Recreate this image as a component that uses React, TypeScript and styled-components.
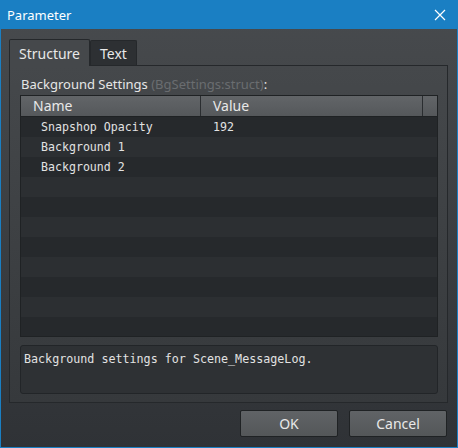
import styled, { createGlobalStyle } from "styled-components";

const GlobalStyle = createGlobalStyle`
  html, body {
    margin: 0;
    padding: 0;
    background: #2f3236;
  }
  * {
    box-sizing: border-box;
  }
`;

const Window = styled.div`
  width: 458px;
  height: 448px;
  display: flex;
  flex-direction: column;
  border: 1px solid #1a7fc3;
  border-top: none;
  background: linear-gradient(#484b4e, #2f3236);
  font-family: "Noto Sans", "Open Sans", sans-serif;
  color: #e6e6e6;
`;

const TitleBar = styled.div`
  height: 29px;
  background: #1a7fc3;
  display: flex;
  align-items: center;
  justify-content: space-between;
  padding: 0 12px 0 7px;
  margin: 0 -1px;
  color: #ffffff;
  font-size: 13px;
`;

const Body = styled.div`
  flex: 1;
  display: flex;
  flex-direction: column;
  padding: 9px 9px 10px 8px;
`;

const TabRow = styled.div`
  display: flex;
  align-items: flex-end;
  height: 27px;
`;

const Tab = styled.div<{ $active?: boolean }>`
  height: ${(p) => (p.$active ? "27px" : "25px")};
  padding: 0 9px;
  display: flex;
  align-items: center;
  font-size: 14px;
  color: #e8e8e8;
  background: ${(p) => (p.$active ? "#45484b" : "#2d3033")};
  border: 1px solid #25282b;
  border-bottom: none;
  border-radius: 2px 2px 0 0;
  margin-bottom: ${(p) => (p.$active ? "-1px" : "0")};
  position: relative;
  z-index: ${(p) => (p.$active ? 1 : 0)};
`;

const Pane = styled.div`
  height: 338px;
  border: 1px solid #25282b;
  background: linear-gradient(#45484b, #36393c);
  padding: 11px 9px 8px 10px;
  display: flex;
  flex-direction: column;
`;

const Label = styled.div`
  font-size: 13px;
  line-height: 15px;
  color: #e6e6e6;
  margin-bottom: 3px;
  padding-left: 1px;
`;

const Hint = styled.span`
  color: #6a6d70;
`;

const Table = styled.div`
  height: 242px;
  border: 1px solid #1f2224;
  background: #26292c;
  display: flex;
  flex-direction: column;
  overflow: hidden;
`;

const HeaderRow = styled.div`
  display: grid;
  grid-template-columns: 180px 222px 1fr;
  height: 21px;
  flex-shrink: 0;
  border-bottom: 1px solid #1f2224;
`;

const HeaderCell = styled.div`
  background: linear-gradient(#626568, #55585b);
  border-right: 1px solid #2a2d30;
  font-size: 14px;
  line-height: 20px;
  padding-left: 12px;
  color: #e8e8e8;
  &:last-child {
    border-right: none;
  }
`;

const Row = styled.div<{ $odd: boolean }>`
  display: grid;
  grid-template-columns: 180px 1fr;
  height: 20px;
  flex-shrink: 0;
  background: ${(p) => (p.$odd ? "#2c2f32" : "#26292c")};
  font-family: "DejaVu Sans Mono", "Liberation Mono", monospace;
  font-size: 11.6px;
  line-height: 20px;
  color: #e2e2e2;
`;

const Cell = styled.div<{ $pad: number }>`
  padding-left: ${(p) => p.$pad}px;
  white-space: pre;
`;

const Description = styled.div`
  margin-top: 8px;
  height: 49px;
  border: 1px solid #222528;
  border-radius: 3px;
  background: #2e3134;
  padding: 5px 3px;
  font-family: "DejaVu Sans Mono", "Liberation Mono", monospace;
  font-size: 11.7px;
  line-height: 16px;
  color: #e2e2e2;
`;

const Footer = styled.div`
  margin-top: auto;
  display: flex;
  justify-content: flex-end;
  gap: 11px;
  padding-right: 1px;
`;

const Button = styled.div`
  width: 98px;
  height: 27px;
  border: 1px solid #1f2224;
  border-radius: 2px;
  background: linear-gradient(#606366, #545759);
  display: flex;
  align-items: center;
  justify-content: center;
  font-size: 14px;
  color: #e8e8e8;
`;

const rows = [
  ["Snapshop Opacity", "192"],
  ["Background 1", ""],
  ["Background 2", ""],
];

export default function App() {
  const filled = Array.from({ length: 11 }, (_, i) => rows[i] ?? ["", ""]);
  return (
    <>
      <GlobalStyle />
      <Window>
        <TitleBar>
          <span>Parameter</span>
          <svg width="12" height="12" viewBox="0 0 12 12">
            <path d="M1 1 11 11M11 1 1 11" stroke="#fff" strokeWidth="1.2" />
          </svg>
        </TitleBar>
        <Body>
          <TabRow>
            <Tab $active>Structure</Tab>
            <Tab>Text</Tab>
          </TabRow>
          <Pane>
            <Label>
              Background Settings <Hint>(BgSettings:struct)</Hint>:
            </Label>
            <Table>
              <HeaderRow>
                <HeaderCell>Name</HeaderCell>
                <HeaderCell>Value</HeaderCell>
                <HeaderCell />
              </HeaderRow>
              {filled.map(([name, value], i) => (
                <Row key={i} $odd={i % 2 === 1}>
                  <Cell $pad={20}>{name}</Cell>
                  <Cell $pad={12}>{value}</Cell>
                </Row>
              ))}
            </Table>
            <Description>Background settings for Scene_MessageLog.</Description>
          </Pane>
          <Footer>
            <Button>OK</Button>
            <Button>Cancel</Button>
          </Footer>
        </Body>
      </Window>
    </>
  );
}
